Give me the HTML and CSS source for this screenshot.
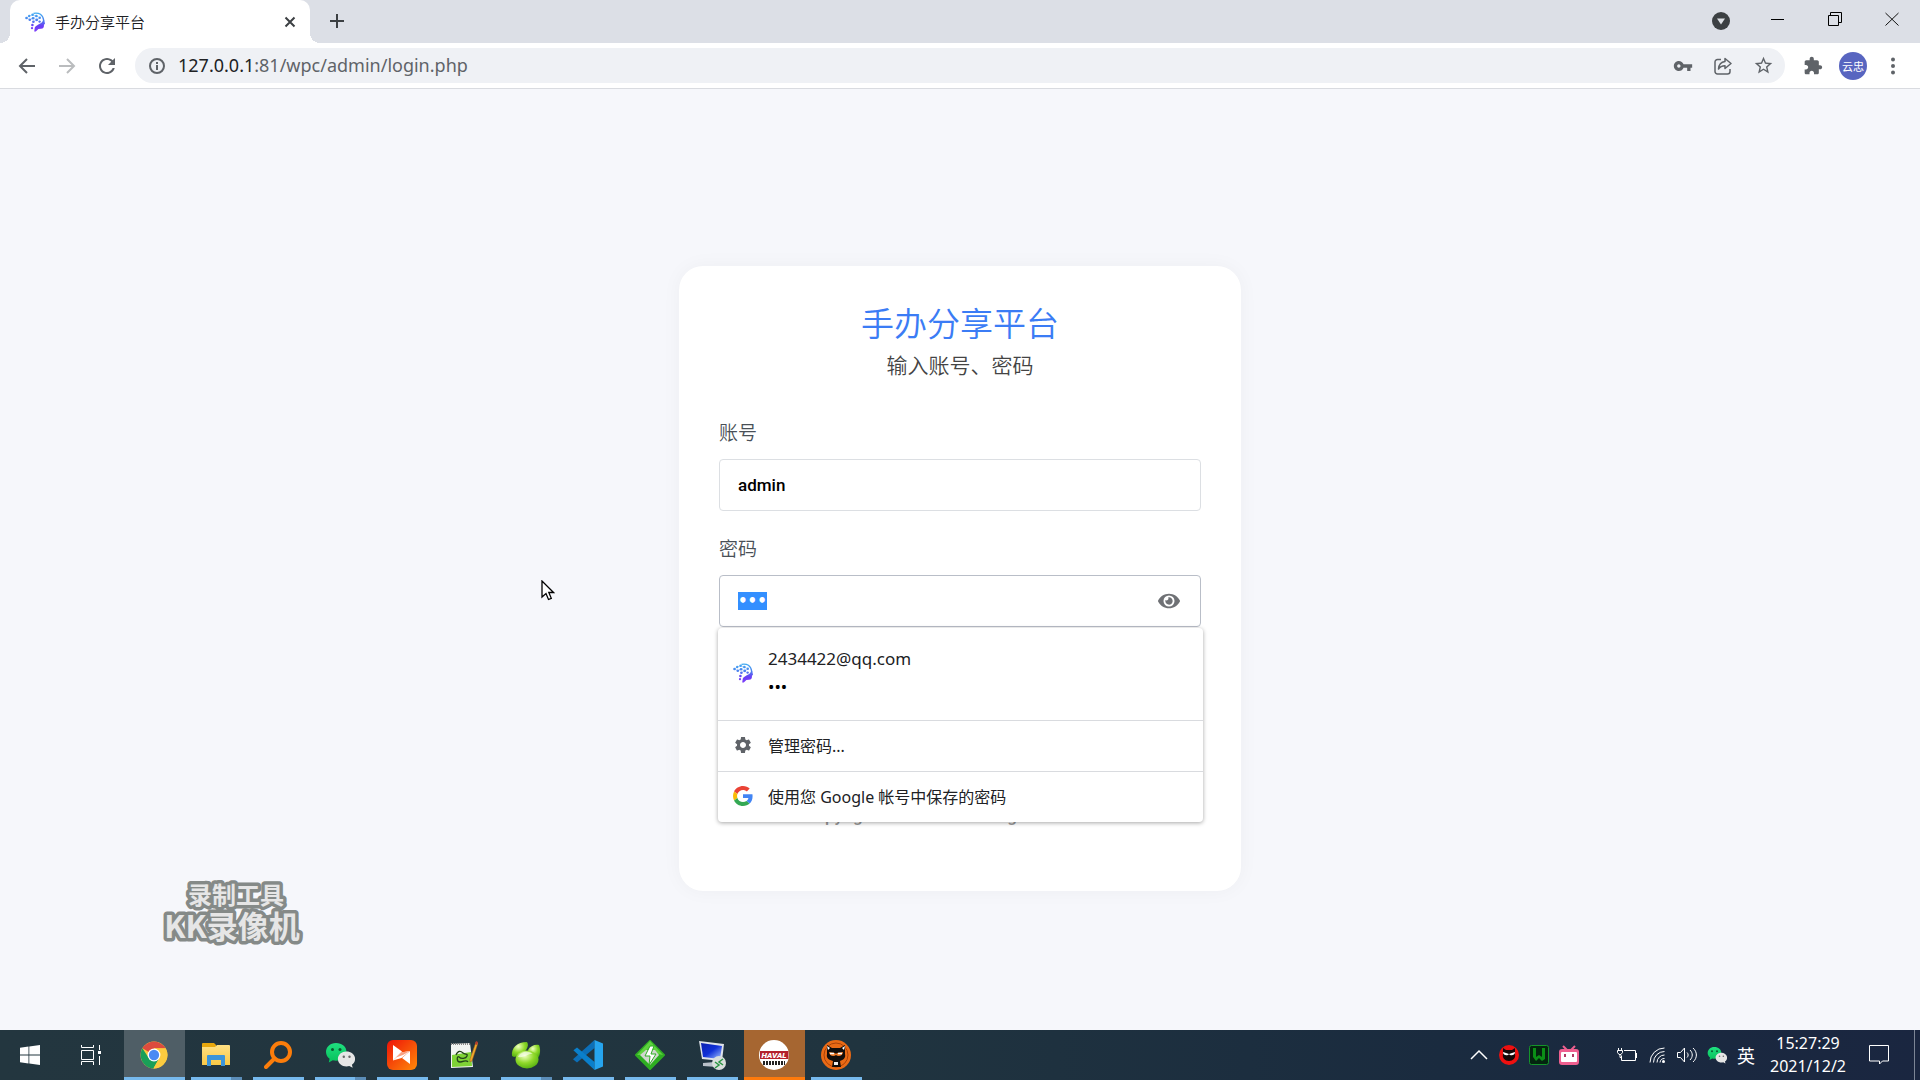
FILE: index.html
```html
<!DOCTYPE html>
<html lang="zh-CN">
<head>
<meta charset="utf-8">
<title>手办分享平台</title>
<link rel="stylesheet" href="styles.css">
</head>
<body>
<svg class="defs" aria-hidden="true">
  <defs>
    <linearGradient id="brandFill" x1="0" y1="0" x2="0" y2="20" gradientUnits="userSpaceOnUse">
      <stop offset="0" stop-color="#3fb2f2"/><stop offset=".45" stop-color="#4d7bee"/><stop offset=".7" stop-color="#6a3df5"/><stop offset="1" stop-color="#8040fa"/>
    </linearGradient>
    <linearGradient id="folderFill" x1="0" y1="0" x2="0" y2="1"><stop offset="0" stop-color="#ffe083"/><stop offset="1" stop-color="#f9c846"/></linearGradient>
    <linearGradient id="greenFill" x1="0" y1="0" x2="0" y2="1"><stop offset="0" stop-color="#1fe080"/><stop offset="1" stop-color="#07c05a"/></linearGradient>
    <linearGradient id="redFill" x1="0" y1="0" x2="1" y2="1"><stop offset="0" stop-color="#ee1208"/><stop offset="1" stop-color="#ff8a08"/></linearGradient>
    <linearGradient id="screenFill" x1="0" y1="0" x2="1" y2="1"><stop offset="0" stop-color="#0a1fae"/><stop offset=".5" stop-color="#1030d8"/><stop offset="1" stop-color="#a9c8ff"/></linearGradient>
    <radialGradient id="limeFill" cx=".4" cy=".3" r=".8"><stop offset="0" stop-color="#f0ffc0"/><stop offset=".5" stop-color="#8fd92a"/><stop offset="1" stop-color="#4aa80c"/></radialGradient>
  </defs>
  <symbol id="brand" viewBox="0 0 20 20">
    <g fill="url(#brandFill)">
      <circle cx="1.500" cy="6" r="1.300"/><circle cx="4.200" cy="4" r="1.200"/><circle cx="4.800" cy="7.800" r="1.300"/><circle cx="7.600" cy="2.800" r="1.300"/><circle cx="8" cy="6.200" r="1.300"/><circle cx="8.400" cy="9.800" r="1.300"/><circle cx="11.400" cy="4" r="1.300"/><circle cx="11.800" cy="7.800" r="1.400"/><circle cx="14.800" cy="5.800" r="1.200"/><circle cx="14.600" cy="9.600" r="1.200"/><circle cx="7.400" cy="13" r="1.300"/><circle cx="7" cy="16.200" r="1.100"/>
      <path d="M19.300 8l.7 4-1 .5c0 3-.6 4.200-3 4.300l-2.600.2-2.600 2.600-1.600-.2.600-4c1-1.600 3-2.400 5-3.600 2-1.200 3.200-2.400 3.300-4.600z"/>
    </g>
    <path d="M8.500 1.300C14 .3 18 2.500 18.700 8.500" fill="none" stroke="url(#brandFill)" stroke-width="1.300"/>
    <path d="M1.500 6l2.700-2 3.400-1.200 3.800 1.200 3.400 1.800M1.500 6l3.300 1.800L8 6.200 11.400 4M8 6.200l3.800 1.600 3-2M8.400 9.800l3.400-2" fill="none" stroke="url(#brandFill)" stroke-width=".4"/>
  </symbol>
  <symbol id="wechat" viewBox="0 0 30 26">
    <path d="M11 1C5 1 1 5 1 10c0 3 1.500 5.200 3.600 6.800L3.800 20.500l4-2.200c1 .3 2 .4 3.200.4 6 0 10.500-4 10.500-8.900S17 1 11 1z" fill="url(#greenFill)"/>
    <circle cx="7.500" cy="7.500" r="1.500" fill="#0a5b31"/><circle cx="15" cy="7.500" r="1.500" fill="#0a5b31"/>
    <path d="M21.500 9.500c-4.800 0-8.600 3.200-8.600 7.400s3.800 7.500 8.600 7.500c1 0 2-.2 2.800-.4l3.400 1.800-.8-3c2-1.400 3.200-3.500 3.200-5.900 0-4.200-3.800-7.400-8.600-7.400z" fill="#e6e6e6"/>
    <circle cx="18.800" cy="14.800" r="1.200" fill="#666"/><circle cx="24.500" cy="14.800" r="1.200" fill="#666"/>
  </symbol>
</svg>

<header class="browser">
  <div class="tabstrip">
    <div class="tab">
      <svg class="favicon" aria-hidden="true"><use href="#brand"/></svg>
      <span class="tab-title">手办分享平台</span>
      <button class="icon-button tab-close" aria-label="关闭标签页"><svg width="12" height="12" viewBox="0 0 12 12"><path d="M1.500 1.500l9 9m0-9l-9 9" stroke="#3c4043" stroke-width="2" fill="none"/></svg></button>
    </div>
    <button class="icon-button new-tab" aria-label="打开新的标签页"><svg width="16" height="16" viewBox="0 0 16 16"><path d="M8 1v14M1 8h14" stroke="#3c4043" stroke-width="2" fill="none"/></svg></button>
    <div class="window-controls">
      <button class="icon-button tab-search" aria-label="搜索标签页"><svg width="18" height="18" viewBox="0 0 18 18"><circle cx="9" cy="9" r="9" fill="#3c4043"/><path d="M5 6.500h8L9 12.500z" fill="#dee1e6"/></svg></button>
      <button class="caption" aria-label="最小化"><svg width="14" height="14"><path d="M0 7.500h13" stroke="#000"/></svg></button>
      <button class="caption" aria-label="还原"><svg width="14" height="14"><path d="M.5 3.500h10v10H.5zM2.500 3V.5h11v10H11" stroke="#000" fill="none"/></svg></button>
      <button class="caption" aria-label="关闭"><svg width="14" height="14"><path d="M.5 1l13 12.500M13.500 1L.5 13.500" stroke="#111" fill="none"/></svg></button>
    </div>
  </div>
  <div class="toolbar">
    <button class="icon-button" aria-label="后退"><svg width="18" height="18" viewBox="0 0 18 18"><path d="M17 9H2M9 2L2 9l7 7" stroke="#5f6368" stroke-width="2" fill="none"/></svg></button>
    <button class="icon-button" aria-label="前进"><svg width="18" height="18" viewBox="0 0 18 18"><path d="M1 9h15M9 2l7 7-7 7" stroke="#babcbe" stroke-width="2" fill="none"/></svg></button>
    <button class="icon-button" aria-label="重新加载"><svg width="24" height="24" viewBox="0 0 24 24" fill="#5f6368"><path d="M17.650 6.350C16.200 4.900 14.210 4 12 4c-4.420 0-7.990 3.580-7.990 8s3.570 8 7.990 8c3.730 0 6.840-2.550 7.730-6h-2.080c-.82 2.330-3.040 4-5.650 4-3.310 0-6-2.690-6-6s2.690-6 6-6c1.660 0 3.140.69 4.220 1.780L13 11h7V4l-2.350 2.350z"/></svg></button>
    <div class="omnibox">
      <svg width="16" height="16" viewBox="0 0 16 16"><circle cx="8" cy="8" r="7" stroke="#5f6368" stroke-width="2" fill="none"/><path d="M8 7v5M8 4v2" stroke="#5f6368" stroke-width="2"/></svg>
      <span class="url"><span class="url-host">127.0.0.1</span>:81/wpc/admin/login.php</span>
      <button class="icon-button" aria-label="管理密码"><svg width="20" height="20" viewBox="0 0 24 24" fill="#5f6368"><path d="M12.650 10C11.830 7.670 9.610 6 7 6c-3.310 0-6 2.690-6 6s2.690 6 6 6c2.610 0 4.830-1.670 5.650-4H17v4h4v-4h2v-4H12.650zM7 14c-1.100 0-2-.9-2-2s.9-2 2-2 2 .9 2 2-.9 2-2 2z"/></svg></button>
      <button class="icon-button" aria-label="分享此页"><svg width="18" height="18" viewBox="0 0 18 18" fill="none" stroke="#5f6368" stroke-width="1.500"><path d="M7 2.500H3.500A2.500 2.500 0 0 0 1 5v9.500A2.500 2.500 0 0 0 3.500 17h10a2.500 2.500 0 0 0 2.500-2.500V12"/><path d="M11 1.500L17 6.500l-6 5V8.700c-3 0-5 .8-6.500 3.300.3-4 2.500-7 6.500-7.500z" stroke-linejoin="round"/></svg></button>
      <button class="icon-button" aria-label="为此标签页添加书签"><svg width="21" height="21" viewBox="0 0 24 24" fill="#5f6368"><path d="M22 9.240l-7.190-.62L12 2 9.190 8.630 2 9.240l5.460 4.730L5.820 21 12 17.270 18.180 21l-1.630-7.030L22 9.240zM12 15.400l-3.760 2.270 1-4.280-3.320-2.880 4.380-.38L12 6.100l1.710 4.040 4.380.38-3.320 2.880 1 4.280L12 15.400z"/></svg></button>
    </div>
    <button class="icon-button" aria-label="扩展程序"><svg width="20" height="20" viewBox="0 0 24 24" fill="#5f6368"><path d="M20.500 11H19V7c0-1.100-.9-2-2-2h-4V3.500C13 2.120 11.880 1 10.500 1S8 2.120 8 3.500V5H4c-1.100 0-1.990.9-1.990 2v3.800H3.500c1.490 0 2.700 1.210 2.700 2.700s-1.210 2.700-2.700 2.700H2V20c0 1.100.9 2 2 2h3.800v-1.500c0-1.490 1.210-2.700 2.700-2.700 1.490 0 2.700 1.210 2.700 2.700V22H17c1.100 0 2-.9 2-2v-4h1.500c1.380 0 2.500-1.120 2.500-2.500S21.880 11 20.500 11z"/></svg></button>
    <button class="icon-button avatar">云忠</button>
    <button class="icon-button" aria-label="菜单"><svg width="18" height="18" viewBox="0 0 18 18" fill="#5f6368"><circle cx="9" cy="2.500" r="2"/><circle cx="9" cy="9" r="2"/><circle cx="9" cy="15.500" r="2"/></svg></button>
  </div>
</header>

<main class="page">
  <form class="card">
    <h1 class="card-title">手办分享平台</h1>
    <p class="card-subtitle">输入账号、密码</p>
    <label class="field-label" for="account">账号</label>
    <input class="field" id="account" type="text" value="admin">
    <label class="field-label" for="password">密码</label>
    <div class="password">
      <input class="field field-active" id="password" type="password" value="123" autofocus>
      <button class="icon-button reveal" type="button" aria-label="显示密码"><svg width="22" height="20" viewBox="0 0 576 512" fill="#6f7175"><path d="M572.520 241.400C518.290 135.590 410.930 64 288 64S57.680 135.640 3.480 241.410a32.350 32.350 0 0 0 0 29.190C57.710 376.410 165.070 448 288 448s230.320-71.640 284.520-177.410a32.350 32.350 0 0 0 0-29.190zM288 400a144 144 0 1 1 144-144 143.930 143.930 0 0 1-144 144zm0-240a95.310 95.310 0 0 0-25.310 3.790 47.850 47.850 0 0 1-66.900 66.900A95.780 95.780 0 1 0 288 160z"/></svg></button>
      <div class="suggestions">
        <button class="suggestion suggestion-account" type="button">
          <svg class="suggestion-icon" aria-hidden="true"><use href="#brand"/></svg>
          <span class="suggestion-text"><span>2434422@qq.com</span><span class="dots">•••</span></span>
        </button>
        <button class="suggestion" type="button">
          <svg class="suggestion-icon" viewBox="0 0 24 24" fill="#5f6368"><path d="M19.140 12.940c.04-.3.06-.61.06-.94 0-.32-.02-.64-.07-.94l2.030-1.580c.18-.14.23-.41.12-.61l-1.920-3.320c-.12-.22-.37-.29-.59-.22l-2.390.96c-.5-.38-1.030-.7-1.620-.94l-.36-2.540c-.04-.24-.24-.41-.48-.41h-3.840c-.24 0-.43.17-.47.41l-.36 2.540c-.59.24-1.130.57-1.620.94l-2.390-.96c-.22-.08-.47 0-.59.22L2.740 8.870c-.12.21-.08.47.12.61l2.030 1.580c-.05.3-.09.63-.09.94s.02.64.07.94l-2.030 1.580c-.18.14-.23.41-.12.61l1.920 3.320c.12.22.37.29.59.22l2.390-.96c.5.38 1.030.7 1.620.94l.36 2.540c.05.24.24.41.48.41h3.840c.24 0 .44-.17.47-.41l.36-2.540c.59-.24 1.130-.56 1.620-.94l2.390.96c.22.08.47 0 .59-.22l1.920-3.320c.12-.22.07-.47-.12-.61l-2.010-1.580zM12 15.600c-1.980 0-3.600-1.620-3.600-3.600s1.620-3.600 3.600-3.600 3.600 1.620 3.600 3.600-1.620 3.600-3.600 3.600z"/></svg>
          <span>管理密码...</span>
        </button>
        <button class="suggestion" type="button">
          <svg class="suggestion-icon" viewBox="0 0 48 48"><path fill="#EA4335" d="M24 9.500c3.540 0 6.710 1.220 9.210 3.600l6.850-6.850C35.900 2.380 30.470 0 24 0 14.620 0 6.510 5.380 2.560 13.220l7.980 6.190C12.430 13.720 17.740 9.500 24 9.500z"/><path fill="#4285F4" d="M46.980 24.550c0-1.570-.15-3.090-.38-4.550H24v9.020h12.940c-.58 2.960-2.260 5.480-4.780 7.180l7.730 6c4.510-4.180 7.090-10.360 7.090-17.650z"/><path fill="#FBBC05" d="M10.530 28.590c-.48-1.450-.76-2.990-.76-4.590s.27-3.140.76-4.590l-7.980-6.190C.92 16.460 0 20.120 0 24c0 3.880.92 7.540 2.560 10.780l7.970-6.190z"/><path fill="#34A853" d="M24 48c6.480 0 11.930-2.130 15.890-5.810l-7.730-6c-2.150 1.450-4.920 2.300-8.160 2.300-6.260 0-11.570-4.220-13.470-9.910l-7.980 6.190C6.510 42.620 14.620 48 24 48z"/></svg>
          <span>使用您 Google 帐号中保存的密码</span>
        </button>
      </div>
    </div>
    <p class="copyright">Copyright © 2021.xxx All rights reserved.</p>
  </form>

  <svg class="watermark" viewBox="0 0 150 76" role="img" aria-label="录制工具 KK录像机">
    <text x="77" y="32" font-size="24">录制工具</text>
    <text x="73" y="66" font-size="31">KK录像机</text>
  </svg>
  <svg class="pointer" viewBox="0 0 14 22" aria-hidden="true"><path d="M1 1v16l4-3.500 2.500 6 2.800-1.200L7.800 12.500H12.500z" fill="#fff" stroke="#000" stroke-width="1.300"/></svg>
</main>

<footer class="taskbar">
  <nav class="apps" aria-label="任务栏">
    <button class="app app-plain" aria-label="开始"><svg width="20" height="20" viewBox="0 0 20 20" fill="#fff"><path d="M0 2.800l8.500-1.200v8H0zM9.300 1.500L20 0v9.600H9.300zM0 10.400h8.500v8L0 17.200zM9.300 10.400H20V20L9.300 18.500z"/></svg></button>
    <button class="app app-plain" aria-label="任务视图"><svg width="21" height="20" viewBox="0 0 21 20" fill="none" stroke="#fff"><path d="M.5 0v2.500h12V0M.5 5.500h12v9H.5zM.5 20v-3.500h12V20M18.500 0v5M18.500 11v9"/><path d="M17 6h3v3h-3z" fill="#fff" stroke="none"/></svg></button>
    <button class="app app-current" aria-label="Chrome"><svg width="28" height="28" viewBox="0 0 48 48"><circle cx="24" cy="24" r="23" fill="#fbc93c"/><path d="M24 24L4.100 12.500A23 23 0 0 1 43.900 12.500H24z" fill="#dd4b3e"/><path d="M4.100 12.500A23 23 0 0 0 23 47l10-17-18-1z" fill="#1a9f58"/><path d="M24 13h20.200A23 23 0 0 1 23 47l10-18z" fill="#fccb3f"/><circle cx="24" cy="24" r="11" fill="#fff"/><circle cx="24" cy="24" r="8.800" fill="#4a8af4"/></svg></button>
    <button class="app app-multi" aria-label="文件资源管理器"><svg width="28" height="24" viewBox="0 0 28 24"><path d="M0 1a1 1 0 0 1 1-1h11l2 2v4H0z" fill="#e8a70c"/><path d="M0 4h13l2-2h12a1 1 0 0 1 1 1v19H0z" fill="url(#folderFill)"/><path d="M5 23V13a1 1 0 0 1 1-1h16a1 1 0 0 1 1 1v10h-4v-6H9v6z" fill="#3b94d9"/></svg></button>
    <button class="app" aria-label="搜索"><svg width="28" height="28" viewBox="0 0 28 28" fill="none" stroke="#fb7d0b"><circle cx="17" cy="11" r="9" stroke-width="4"/><path d="M10.500 17.500L2 26" stroke-width="4" stroke-linecap="round"/></svg></button>
    <button class="app app-multi" aria-label="微信"><svg width="30" height="26"><use href="#wechat"/></svg></button>
    <button class="app" aria-label="播放器"><svg width="30" height="30" viewBox="0 0 30 30"><rect width="30" height="30" rx="6" fill="url(#redFill)"/><path d="M6 5l9 6.500L6 20.500z" fill="#fff"/><path d="M23 11v13l-8-6z" fill="#fff"/><path d="M6 20.500l8-8 9-1.500-8.500 7z" fill="#fff"/><path d="M9 17.500l5-5 9-1.500-7 4z" fill="#f9a080"/></svg></button>
    <button class="app" aria-label="Notepad++"><svg width="28" height="28" viewBox="0 0 28 28"><path d="M1 3l19-1 3 24-22 1z" fill="#f1f4f2"/><path d="M2 14l19-3 1 14-20 1z" fill="#7ed336"/><path d="M1 3h19" stroke="#888" stroke-width="2" stroke-dasharray="1 1"/><path d="M6 14c2-5 5-4 7-2s5 0 4 3-6 3-8 1-3 5 1 5 6-3 8 0" fill="none" stroke="#23431b" stroke-width="1.300"/><path d="M26 1l2 1-6 18-2 1v-3z" fill="#f0a92c" stroke="#9b5b18" stroke-width=".5"/><path d="M26 0l2 1-1 3-2-1z" fill="#b33a2e"/></svg></button>
    <button class="app app-multi" aria-label="Navicat"><svg width="30" height="28" viewBox="0 0 30 28"><path d="M1 15C0 7 6 1 16 1c3 3-1 13-13 15z" fill="url(#limeFill)"/><path d="M17 9c2-4 7-6 11-5 2 5 1 10-1 13-5 0-9-2-10-8z" fill="url(#limeFill)"/><ellipse cx="16" cy="18.500" rx="11.500" ry="9" fill="url(#limeFill)"/><path d="M7 16c2-5 10-7 15-3-4-1-8 4-15 3z" fill="#fff" opacity=".6"/></svg></button>
    <button class="app" aria-label="Visual Studio Code"><svg width="30" height="30" viewBox="0 0 30 30"><path d="M21.500 0v8L4 22.500 0 19.300z" fill="#0c6fb8"/><path d="M21.500 30v-8L4 7.500.4 10.300z" fill="#0a7fcb"/><path d="M21.500 0L30 3.500v23L21.500 30z" fill="#26a4ee"/></svg></button>
    <button class="app" aria-label="调试工具"><svg width="30" height="30" viewBox="0 0 30 30"><path d="M15 1l14 14-14 14L1 15z" fill="#2fae22" stroke="#2fae22" stroke-width="2" stroke-linejoin="round"/><path d="M15 1l13 14-5-1-8-7-8 8-5 0z" fill="#5fd23f"/><path d="M5 15l6-5h9l4 5-9 10z" fill="#d0d6cf"/><path d="M15 6l-5 10h5l-1 9 7-11h-5l3-8z" fill="#fff" stroke="#2fae22"/></svg></button>
    <button class="app" aria-label="远程桌面"><svg width="28" height="30" viewBox="0 0 28 30"><path d="M5 23l12-1 2 5-14-1z" fill="#b9c0c9"/><path d="M1 1l25 3-2 17L4 19z" fill="#dfe3ea"/><path d="M3 3l21 3-2 13L5 17z" fill="url(#screenFill)"/><circle cx="21" cy="23" r="7" fill="#dadfdc"/><path d="M17 22l4 3-4 3M25 19l-4 3 4 3" fill="none" stroke="#2a9442" stroke-width="1.500"/></svg></button>
    <button class="app app-alert" aria-label="HAVAL"><svg width="30" height="30" viewBox="0 0 30 30"><circle cx="15" cy="15" r="15" fill="#fff"/><path d="M1 11h28.500v8H1z" fill="#b3202c"/><text x="15" y="18" font-size="8" text-anchor="middle" fill="#fff" class="logo-text">HAVAL</text><path d="M4 23h22" stroke="#222" stroke-width="4" stroke-dasharray="2 1"/></svg></button>
    <button class="app" aria-label="KK录像机"><svg width="30" height="30" viewBox="0 0 30 30"><circle cx="15" cy="15" r="15" fill="#ea6a15"/><circle cx="15" cy="15" r="12" fill="none" stroke="#a9420a"/><path d="M6 5l5 3h8l5-3v9c1 4-2 6-5 7l1 6h-9l1-6c-4-1-7-3-6-7z" fill="#120d0b"/><path d="M6 6l3 2-2 2zM24 6l-3 2 2 2z" fill="#fff"/><path d="M8 12l6 1 1 1 1-1 6-1c0 4-5 5-7 3-2 2-7 1-7-3z" fill="#f07b2a"/><path d="M9 13.500h4M17 13.500h4" stroke="#fff" stroke-width="1.500"/><path d="M13 22h4v3h-4z" fill="#eee"/></svg></button>
  </nav>
  <div class="tray">
    <svg class="tray-icon" viewBox="0 0 20 20"><path d="M2 14l8-8 8 8" fill="none" stroke="#fff" stroke-width="1.500"/></svg>
    <svg class="tray-icon" viewBox="0 0 20 20"><circle cx="10" cy="10" r="10" fill="#ee1010"/><path d="M4 3l3 2h6l3-2v6c1 4-2 7-6 7s-7-3-6-7z" fill="#120808"/><path d="M4 7l6 2 6-2c0 4-5 4-6 2-1 2-6 2-6-2z" fill="#fff"/></svg>
    <svg class="tray-icon" viewBox="0 0 20 20"><rect x=".5" y=".5" width="19" height="19" rx="2" fill="#04240f" stroke="#15942b"/><path d="M4 3v9l3 4 3-3 3 3 3-2V3h-3v9l-3-2-3 2V3z" fill="#0b8f16"/></svg>
    <svg class="tray-icon tray-gap" viewBox="0 0 20 20"><path d="M4 1l4 4M16 1l-4 4" stroke="#ee5f8f" stroke-width="2"/><rect y="4" width="20" height="16" rx="3" fill="#ee5f8f"/><rect x="2" y="7" width="16" height="10" rx="1" fill="#fff"/><path d="M6 9v3M14 9v3" stroke="#b03a64" stroke-width="2"/></svg>
    <svg class="tray-icon" viewBox="0 0 20 20" fill="none" stroke="#fff"><path d="M7 5.500h11.500v10h-14v-5M19.500 8v5M1.500 3v2M4.500 3v2M.5 5.500h5v2l-1.500 2h-2l-1.500-2zM3 9.500v3h1.500"/></svg>
    <svg class="tray-icon" viewBox="0 0 20 20" fill="none" stroke="#fff"><path d="M3 17.500A14.500 14.500 0 0 1 17.500 3M6.500 17.500a11 11 0 0 1 11-11M10 17.500A7.500 7.500 0 0 1 17.500 10M13 17.500a4.500 4.500 0 0 1 4.500-4"/><circle cx="16.500" cy="16.500" r="1.500" fill="#fff" stroke="none"/></svg>
    <svg class="tray-icon" viewBox="0 0 20 20" fill="none" stroke="#fff"><path d="M.5 7.500h3l4-4.500v14l-4-4.500h-3zM10 7.500c1.500 1.500 1.500 3.500 0 5M13 5c3 3 3 7 0 10M16 3c4.500 4 4.500 10 0 14"/></svg>
    <svg class="tray-icon"><use href="#wechat"/></svg>
    <span class="ime">英</span>
    <div class="clock"><time>15:27:29</time><time>2021/12/2</time></div>
    <svg class="tray-icon" viewBox="0 0 20 20"><path d="M.5.500h19v15.500h-6L10.500 19v-3H.5z" fill="none" stroke="#fff"/></svg>
    <span class="show-desktop"></span>
  </div>
</footer>
<script src="app.js"></script>
</body>
</html>
```
FILE: app.js
```js
const password = document.getElementById("password");
password.focus();
password.select();
```
FILE: styles.css
```css
* { box-sizing: border-box; }

body {
  margin: 0;
  min-height: 100vh;
  display: flex;
  flex-direction: column;
  font-family: "Noto Sans", "Noto Sans CJK SC", sans-serif;
  font-size: 16px;
  color: #202124;
  background: #f6f7fb;
}

button { font: inherit; color: inherit; border: 0; padding: 0; background: none; }
svg { display: block; flex: none; }
.defs { position: absolute; width: 0; height: 0; }

.icon-button {
  flex: none;
  width: 28px;
  height: 28px;
  display: flex;
  align-items: center;
  justify-content: center;
}

/* Browser frame */
.browser { border-bottom: 1px solid #d9dbe0; }
.tabstrip { height: 43px; display: flex; padding-left: 10px; background: #dcdfe6; }
.tab {
  position: relative;
  width: 300px;
  display: flex;
  align-items: center;
  padding: 0 6px 0 15px;
  border-radius: 10px 10px 0 0;
  background: #fff;
}
.tab::before, .tab::after {
  content: "";
  position: absolute;
  bottom: 0;
  width: 10px;
  height: 10px;
}
.tab::before { right: 100%; background: radial-gradient(circle at 0 0, transparent 10px, #fff 10px); }
.tab::after { left: 100%; background: radial-gradient(circle at 100% 0, transparent 10px, #fff 10px); }
.favicon { width: 20px; height: 20px; }
.tab-title { flex: 1; margin-left: 10px; font-family: "Noto Sans CJK SC", sans-serif; font-size: 15px; font-weight: 350; }
.new-tab { margin: 7px 0 0 13px; }
.window-controls { margin-left: auto; display: flex; }
.tab-search { margin: 7px 14px 0 0; }
.caption { width: 57px; height: 37px; display: flex; align-items: center; justify-content: center; }

.toolbar { height: 45px; display: flex; align-items: center; gap: 12px; padding: 0 13px; background: #fff; }
.omnibox {
  flex: 1;
  height: 35px;
  margin: 0 2px;
  padding: 0 8px 0 14px;
  display: flex;
  align-items: center;
  gap: 12px;
  border-radius: 18px;
  background: #eff1f5;
}
.url { flex: 1; margin-left: 1px; padding-bottom: 2px; font-size: 18px; color: #5f6368; }
.url-host { color: #202124; }
.avatar { border-radius: 50%; background: #5865c0; color: #fff; font-size: 11px; }

/* Login page */
.page {
  position: relative;
  flex: 1;
  display: flex;
  align-items: center;
  justify-content: center;
  padding-top: 37px;
}
.card {
  width: 562px;
  padding: 34px 40px 61px;
  display: flex;
  flex-direction: column;
  border-radius: 24px;
  background: #fff;
  box-shadow: 0 0 20px rgba(0, 0, 0, 0.04);
}
.card-title, .card-subtitle, .field-label { font-family: "Noto Sans CJK SC", sans-serif; font-weight: 350; }
.card-title { margin: 0; font-size: 33px; line-height: 44px; text-align: center; color: #3b7cf5; }
.card-subtitle { margin: 4px 0 28px; font-size: 21px; line-height: 32px; text-align: center; color: #444; }
.field-label { height: 51px; padding-top: 10px; font-size: 19px; line-height: 28px; color: #495057; }
.field {
  width: 100%;
  height: 52px;
  padding: 0 18px;
  font-family: Roboto, sans-serif;
  font-size: 17px;
  font-weight: 500;
  color: #000;
  border: 1px solid #dcdfe3;
  border-radius: 4px;
  outline: 0;
  background: #fff;
}
.field + .field-label { margin-top: 13px; }
.field-active { border-color: #b9bec8; font-family: "DejaVu Sans", sans-serif; font-size: 15px; font-weight: 700; line-height: 21px; }
.field::selection { color: #fff; background: #338fff; }
.password { position: relative; }
.reveal { position: absolute; top: 12px; right: 18px; }

.suggestions {
  position: absolute;
  top: 53px;
  left: -1px;
  right: -2px;
  display: flex;
  flex-direction: column;
  border-radius: 4px;
  background: #fff;
  box-shadow: 0 1px 4px rgba(0, 0, 0, 0.35);
}
.suggestion {
  height: 51px;
  display: flex;
  align-items: center;
  gap: 15px;
  padding: 0 15px 2px;
  text-align: left;
}
.suggestion + .suggestion { border-top: 1px solid #d9dbdf; }
.suggestion-account { height: 92px; font-size: 17px; }
.suggestion-icon { width: 20px; height: 20px; }
.suggestion-text { display: flex; flex-direction: column; line-height: 28px; }
.dots { color: #000; }

.copyright {
  margin: 175px 0 0;
  font-family: Roboto, sans-serif;
  font-size: 17px;
  font-weight: 500;
  line-height: 28px;
  text-align: center;
  color: #999;
}

.watermark { position: absolute; left: 159px; top: 783px; width: 150px; height: 76px; }
.watermark text {
  font-family: "Noto Sans CJK SC", sans-serif;
  font-weight: 700;
  text-anchor: middle;
  fill: #e6e6e6;
  stroke: #858a88;
  stroke-width: 7px;
  stroke-linejoin: round;
  paint-order: stroke;
}
.pointer { position: absolute; left: 541px; top: 491px; width: 14px; height: 22px; }

/* Taskbar */
.taskbar {
  height: 50px;
  display: flex;
  justify-content: space-between;
  color: #fff;
  background: linear-gradient(90deg, #23363f, #20343f 45%, #1a2b3f 75%, #1a2640);
}
.apps { display: flex; gap: 1px; }
.app {
  width: 61px;
  padding-right: 2px;
  display: flex;
  align-items: center;
  justify-content: center;
  background: linear-gradient(#76b9ed, #76b9ed) center bottom / 51px 3px no-repeat;
}
.app-plain { background: none; }
.app-multi { background-image: linear-gradient(90deg, #76b9ed 40px, #5b8db8 40px); }
.app-current { background-color: #4f5e66; background-size: 100% 3px; }
.app-alert { background-color: #a66631; background-image: linear-gradient(#ff7a0c, #ff7a0c); background-size: 100% 3px; }
.logo-text { font-family: Roboto, sans-serif; font-weight: 900; font-style: italic; }

.tray { display: flex; align-items: center; gap: 10px; }
.tray-icon { width: 20px; height: 20px; }
.tray-gap { margin-right: 28px; }
.ime { font-size: 18px; }
.clock { width: 94px; display: flex; flex-direction: column; padding-right: 8px; text-align: center; font-size: 16px; line-height: 23px; }
.show-desktop { width: 6px; height: 50px; margin-left: 15px; border-left: 1px solid #7c8595; }
```
